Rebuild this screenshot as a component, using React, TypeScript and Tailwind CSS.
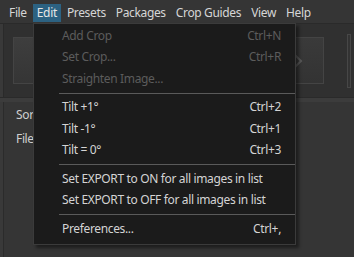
import React from "react";

type Item = { label: string; shortcut?: string; disabled?: boolean } | "sep";

const items: Item[] = [
  { label: "Add Crop", shortcut: "Ctrl+N", disabled: true },
  { label: "Set Crop...", shortcut: "Ctrl+R", disabled: true },
  { label: "Straighten Image...", disabled: true },
  "sep",
  { label: "Tilt +1°", shortcut: "Ctrl+2" },
  { label: "Tilt -1°", shortcut: "Ctrl+1" },
  { label: "Tilt = 0°", shortcut: "Ctrl+3" },
  "sep",
  { label: "Set EXPORT to ON for all images in list" },
  { label: "Set EXPORT to OFF for all images in list" },
  "sep",
  { label: "Preferences...", shortcut: "Ctrl+," },
];

const menus = ["File", "Edit", "Presets", "Packages", "Crop Guides", "View", "Help"];

export default function App() {
  return (
    <div
      className="relative w-[354px] h-[257px] overflow-hidden bg-[#333333] text-[12px] tracking-[-0.35px] text-[#d6d6d6]"
      style={{ fontFamily: '"Noto Sans", "Open Sans", sans-serif' }}
    >
      {/* Menu bar */}
      <div className="flex h-[24px] items-start pt-[4px] bg-[#353535] pl-[5px] border-b border-[#2a2a2a]">
        {menus.map((m) => (
          <div
            key={m}
            className={
              "h-[18px] flex items-center px-[4px] mr-[2px] " +
              (m === "Edit" ? "bg-[#2c6282] text-[#e6e6e6]" : "")
            }
          >
            {m}
          </div>
        ))}
      </div>

      {/* Toolbar */}
      <div className="flex h-[73px] bg-[#303030]">
        <div className="w-[4px] bg-[#393939] border-r border-[#2a2a2a]" />
        <div className="flex-1 flex items-center pl-[9px] pr-[3px] gap-[4px]">
          <div className="w-[40px] h-[47px] border border-[#444] bg-gradient-to-b from-[#3e3e3e] to-[#353535]" />
          <div className="flex-1" />
          <div className="w-[40px] h-[47px] border border-[#444] bg-gradient-to-b from-[#3a3a3a] to-[#333] flex items-center justify-start pl-[6px]">
            <svg width="12" height="20" viewBox="0 0 12 20">
              <path d="M2 2 L10 10 L2 18" fill="none" stroke="#585858" strokeWidth="2" />
            </svg>
          </div>
          <div className="w-[15px]" />
          <div className="w-[4px] h-[54px] border border-[#474747] bg-[#333]" />
        </div>
      </div>

      {/* Divider band */}
      <div className="h-[5px] bg-[#3c3c3c] border-t border-[#2a2a2a]" />

      {/* Panel */}
      <div className="flex h-[155px]">
        <div className="w-[4px] bg-[#393939] border-r border-[#2b2b2b]" />
        <div className="flex-1 bg-[#353535] pl-[12px] pt-[1px] text-[#cfcfcf]">
          <div className="h-[24px] flex items-center">Sorting</div>
          <div className="h-[24px] flex items-center">Filename</div>
        </div>
      </div>

      {/* Dropdown menu */}
      <div className="absolute left-[33px] top-[23px] w-[263px] bg-[#1b1b1b] border border-[#3b3b3b] pt-[1px] pb-[4px] shadow-[3px_3px_3px_rgba(0,0,0,0.45)]">
        {items.map((it, i) =>
          it === "sep" ? (
            <div key={i} className="h-[7px] flex items-center pl-[25px]">
              <div className="h-px w-full bg-[#5a5a5a]" />
            </div>
          ) : (
            <div
              key={i}
              className={
                "h-[21.5px] flex items-center justify-between pl-[28px] pr-[14px] " +
                (it.disabled ? "text-[#5c5c5c]" : "text-[#d4d4d4]")
              }
            >
              <span>{it.label}</span>
              {it.shortcut && <span>{it.shortcut}</span>}
            </div>
          )
        )}
      </div>
    </div>
  );
}
